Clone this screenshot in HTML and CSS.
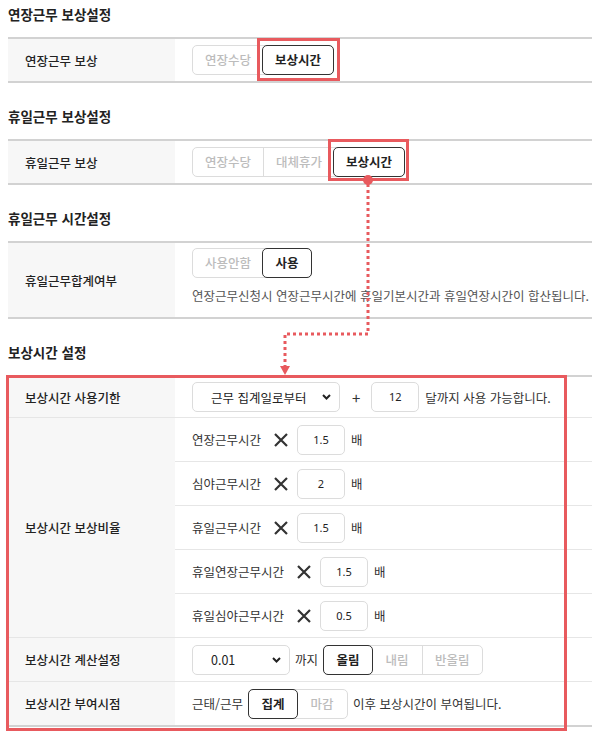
FILE: index.html
```html
<!DOCTYPE html>
<html lang="ko">
<head>
    <meta charset="UTF-8">
    <title>보상시간 설정</title>
    <link rel="stylesheet" href="styles.css">
</head>
<body>
<div class="page">
    <h3 class="sec-title">연장근무 보상설정</h3>
    <div class="form-table">
        <div class="row">
            <div class="th">연장근무 보상</div>
            <div class="td">
                <div class="btn-group">
                    <span class="btn">연장수당</span>
                    <span class="btn on">보상시간</span>
                </div>
            </div>
        </div>
    </div>

    <h3 class="sec-title">휴일근무 보상설정</h3>
    <div class="form-table">
        <div class="row">
            <div class="th">휴일근무 보상</div>
            <div class="td">
                <div class="btn-group">
                    <span class="btn">연장수당</span>
                    <span class="btn">대체휴가</span>
                    <span class="btn on">보상시간</span>
                </div>
            </div>
        </div>
    </div>

    <h3 class="sec-title">휴일근무 시간설정</h3>
    <div class="form-table">
        <div class="row">
            <div class="th">휴일근무합계여부</div>
            <div class="td stack">
                <div class="btn-group">
                    <span class="btn">사용안함</span>
                    <span class="btn on">사용</span>
                </div>
                <p class="desc">연장근무신청시 연장근무시간에 휴일기본시간과 휴일연장시간이 합산됩니다.</p>
            </div>
        </div>
    </div>

    <h3 class="sec-title">보상시간 설정</h3>
    <div class="form-table">
        <div class="row">
            <div class="th">보상시간 사용기한</div>
            <div class="td short">
                <span class="select w148">근무 집계일로부터
                    <svg width="9" height="6" viewBox="0 0 9 6"><path d="M1 1l3.5 3.5L8 1" fill="none" stroke="#222" stroke-width="2"/></svg>
                </span>
                <span class="plus">+</span>
                <span class="num">12</span>
                <span class="txt">달까지 사용 가능합니다.</span>
            </div>
        </div>
        <div class="row">
            <div class="th">보상시간 보상비율</div>
            <div class="td-list">
                <div class="td">
                    <span class="rate-name">연장근무시간</span>
                    <svg class="times" width="16" height="16" viewBox="0 0 16 16"><path d="M2 2l12 12M14 2L2 14" stroke="#333" stroke-width="2.2"/></svg>
                    <span class="num">1.5</span>
                    <span class="txt">배</span>
                </div>
                <div class="td">
                    <span class="rate-name">심야근무시간</span>
                    <svg class="times" width="16" height="16" viewBox="0 0 16 16"><path d="M2 2l12 12M14 2L2 14" stroke="#333" stroke-width="2.2"/></svg>
                    <span class="num">2</span>
                    <span class="txt">배</span>
                </div>
                <div class="td">
                    <span class="rate-name">휴일근무시간</span>
                    <svg class="times" width="16" height="16" viewBox="0 0 16 16"><path d="M2 2l12 12M14 2L2 14" stroke="#333" stroke-width="2.2"/></svg>
                    <span class="num">1.5</span>
                    <span class="txt">배</span>
                </div>
                <div class="td">
                    <span class="rate-name">휴일연장근무시간</span>
                    <svg class="times" width="16" height="16" viewBox="0 0 16 16"><path d="M2 2l12 12M14 2L2 14" stroke="#333" stroke-width="2.2"/></svg>
                    <span class="num">1.5</span>
                    <span class="txt">배</span>
                </div>
                <div class="td">
                    <span class="rate-name">휴일심야근무시간</span>
                    <svg class="times" width="16" height="16" viewBox="0 0 16 16"><path d="M2 2l12 12M14 2L2 14" stroke="#333" stroke-width="2.2"/></svg>
                    <span class="num">0.5</span>
                    <span class="txt">배</span>
                </div>
            </div>
        </div>
        <div class="row">
            <div class="th">보상시간 계산설정</div>
            <div class="td tight">
                <span class="select w98">0.01
                    <svg width="9" height="6" viewBox="0 0 9 6"><path d="M1 1l3.5 3.5L8 1" fill="none" stroke="#222" stroke-width="2"/></svg>
                </span>
                <span class="txt">까지</span>
                <div class="btn-group">
                    <span class="btn on">올림</span>
                    <span class="btn">내림</span>
                    <span class="btn">반올림</span>
                </div>
            </div>
        </div>
        <div class="row">
            <div class="th">보상시간 부여시점</div>
            <div class="td tight">
                <span class="txt">근태/근무</span>
                <div class="btn-group">
                    <span class="btn on">집계</span>
                    <span class="btn">마감</span>
                </div>
                <span class="txt">이후 보상시간이 부여됩니다.</span>
            </div>
        </div>
    </div>

    <!-- 강조 박스와 연결선 -->
    <div class="mark mark-ot"></div>
    <div class="mark mark-hd"></div>
    <div class="mark mark-set"></div>
    <svg class="flow" width="592" height="736" viewBox="0 0 592 736">
        <path d="M368 184V334H285V366" fill="none" stroke="#e85a5e" stroke-width="3" stroke-dasharray="3 3"/>
        <circle cx="368" cy="180" r="5" fill="#e85a5e"/>
        <path d="M280 366h10l-5 9z" fill="#e85a5e"/>
    </svg>
</div>
</body>
</html>
```

FILE: styles.css
```css
*{margin:0;padding:0;box-sizing:border-box;}
body{font-family:"Noto Sans CJK KR","Noto Sans",sans-serif;font-size:12.5px;color:#333;background:#fff;}
.page{position:relative;width:592px;height:736px;padding:4px 0 0 8px;overflow:hidden;}

.sec-title{font-size:13.5px;font-weight:700;color:#222;line-height:20px;margin-bottom:13px;}
.form-table + .sec-title{margin-top:23px;}
.form-table{border-top:2px solid #d2d2d2;border-bottom:2px solid #d2d2d2;}

.row{display:flex;}
.row + .row{border-top:1px solid #e6e6e6;}
.th{width:167px;flex-shrink:0;background:#f7f7f7;padding-left:17px;display:flex;align-items:center;font-weight:500;color:#222;}
.td{flex:1;min-height:42px;padding:5px 0 5px 17px;display:flex;align-items:center;}
.td.short{min-height:40px;}
.td-list{flex:1;}
.td-list .td{min-height:43px;}
.td-list .td + .td{border-top:1px solid #e6e6e6;min-height:44px;}
.tight{min-height:43px;}
.td.stack{flex-direction:column;align-items:flex-start;gap:8px;padding-bottom:11px;}
.desc{color:#555;line-height:20px;}

/* 버튼 그룹 */
.btn-group{display:inline-flex;height:30px;border:1px solid #dcdcdc;border-radius:5px;}
.btn{min-width:50px;padding:0 12px;line-height:28px;text-align:center;color:#bcbcbc;font-weight:500;border-left:1px solid #dcdcdc;}
.btn:first-child{border-left:0;}
.btn.on{color:#222;font-weight:700;border:1px solid #333;border-radius:5px;margin:-1px;line-height:28px;}
.btn.on + .btn{border-left:0;}

.select{display:inline-flex;align-items:center;justify-content:space-between;height:30px;padding:0 8px 0 18px;border:1px solid #dcdcdc;border-radius:5px;color:#222;}
.w148{width:148px;}
.w98{width:98px;}
.num{display:inline-block;width:48px;height:30px;line-height:28px;border:1px solid #dcdcdc;border-radius:5px;text-align:center;color:#222;font-family:"Noto Sans",sans-serif;font-size:11px;}
.plus{margin:0 11px 0 12px;font-size:15px;color:#333;}
.txt{margin-left:6px;color:#333;}
.rate-name{color:#333;}
.times{margin:0 8px 0 12px;}
.tight .txt{margin:0 5px;}
.tight .txt:first-child{margin-left:0;}

/* 강조 표시 */
.mark{position:absolute;border:3px solid #e85a5e;}
.mark-ot{left:257px;top:38px;width:83px;height:43px;}
.mark-hd{left:328px;top:139px;width:81px;height:42px;}
.mark-set{left:6px;top:375px;width:561px;height:356px;}
.flow{position:absolute;left:0;top:0;pointer-events:none;}
```
